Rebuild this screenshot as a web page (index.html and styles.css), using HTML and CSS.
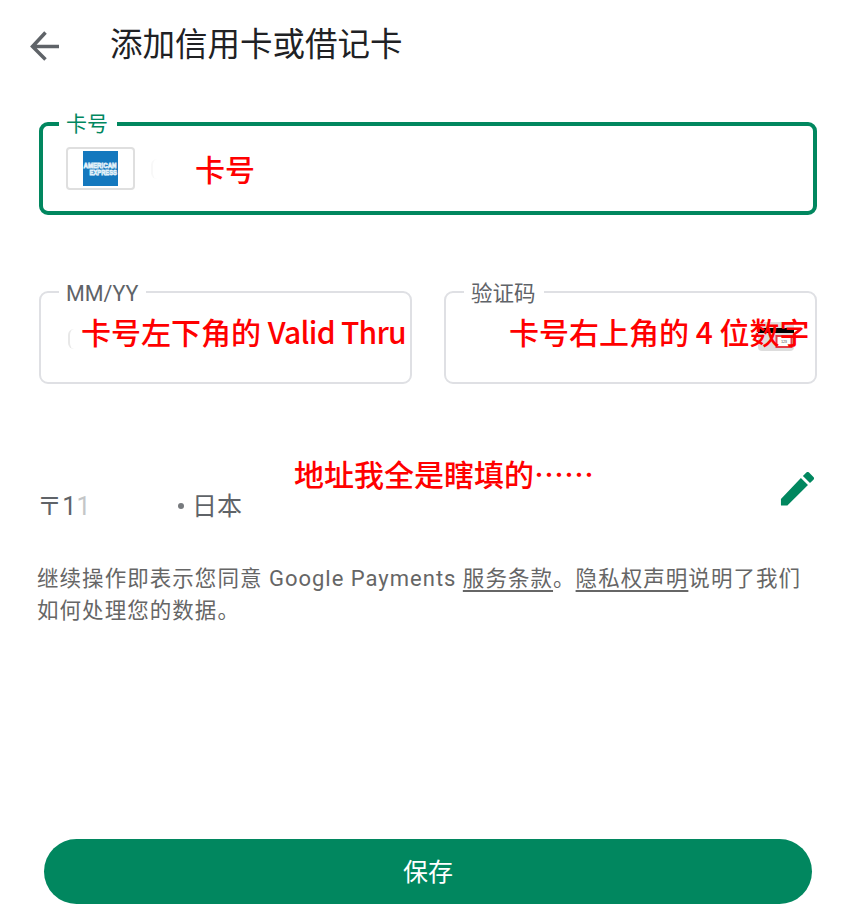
FILE: index.html
```html
<!DOCTYPE html>
<html lang="zh-CN">
<head>
<meta charset="utf-8">
<title>添加信用卡或借记卡</title>
<link rel="stylesheet" href="styles.css">
</head>
<body>
<main class="page">
  <header class="header">
    <svg class="back" viewBox="0 0 30 30"><path d="M15.500 1.500 2.500 15.500l13 13M2.500 15.500h26.500" fill="none" stroke="#5f6368" stroke-width="3.500"/></svg>
    <h1 class="title">添加信用卡或借记卡</h1>
  </header>

  <section class="field field-active">
    <span class="label">卡号</span>
    <div class="brand">
      <svg width="35" height="35" viewBox="0 0 35 35">
        <rect width="35" height="35" fill="#1478be"/>
        <g class="amex"><text x="0.500" y="16.800" textLength="33" lengthAdjust="spacingAndGlyphs">AMERICAN</text><text x="6.500" y="24.300" textLength="27.500" lengthAdjust="spacingAndGlyphs">EXPRESS</text></g>
      </svg>
    </div>
    <i class="smudge"></i>
    <span class="note note-number">卡号</span>
  </section>

  <div class="row">
    <section class="field">
      <span class="label label-date">MM/YY</span>
      <i class="smudge smudge-date"></i>
      <span class="note note-date">卡号左下角的 <span class="note-latin">Valid Thru</span></span>
    </section>
    <section class="field">
      <span class="label label-code">验证码</span>
      <svg class="cvc" width="36" height="29" viewBox="0 0 36 29">
        <rect width="36" height="29" rx="4" fill="#ddd"/>
        <rect y="6" width="36" height="5" fill="#000"/>
        <rect x="18.500" y="14" width="15" height="11" fill="#fff" stroke="#e53946" stroke-width="2"/>
        <text class="digits" x="23" y="21" textLength="6">123</text>
      </svg>
      <span class="note note-code">卡号右上角的 4 位数字</span>
    </section>
  </div>

  <section class="address">
    <span class="note note-address">地址我全是瞎填的……</span>
    <div class="postal"><span>〒1</span><span class="faded">1</span></div>
    <i class="dot"></i>
    <span class="country">日本</span>
    <svg class="edit" width="34" height="34" viewBox="3 3 18 18"><path fill="#01875f" d="M3.500 17.250V20.700h3.400L17.810 9.940l-3.750-3.750L3.500 17.250zM20.710 7.040a1 1 0 0 0 0-1.410l-2.340-2.340a1 1 0 0 0-1.410 0l-1.830 1.830 3.750 3.750 1.830-1.830z"/></svg>
  </section>

  <p class="terms">继续操作即表示您同意 <span class="latin">Google Payments</span> <a>服务条款</a>。<a>隐私权声明</a>说明了我们<br>如何处理您的数据。</p>
  <button class="save">保存</button>
</main>
</body>
</html>
```
FILE: styles.css
```css
* { box-sizing: border-box; }
body { margin: 0; background: #fff; font-family: Roboto, "Noto Sans CJK SC", sans-serif; color: #5f6368; }
.page { height: 923px; padding: 0 44px 0 39px; display: flex; flex-direction: column; overflow: hidden; }
.header { height: 122px; display: flex; align-items: flex-start; margin-left: -9px; flex: none; }
.back { width: 30px; height: 30px; margin-top: 31px; }
.title { margin: 21px 0 0 50px; font-size: 32.5px; line-height: 48px; font-weight: 400; color: #202124; white-space: nowrap; }
.field { position: relative; height: 93px; border: 2px solid #dfe0e4; border-radius: 9px; flex: none; }
.field-active { width: 778px; border: 4px solid #01875f; padding: 21px 0 0 23px; }
.label { position: absolute; top: -15px; left: 18px; padding: 0 7px; background: #fff; font-size: 21.5px; line-height: 32px; height: 32px; white-space: nowrap; }
.field-active .label { left: 16px; top: -18px; width: 58px; color: #01875f; font-size: 21px; }
.label-date { width: 87px; }
.label-code { width: 80px; font-size: 21.5px; }
.brand { width: 69px; height: 43px; border: 2px solid #dfdfdf; border-radius: 4px; display: flex; align-items: center; justify-content: center; }
.amex { font-family: "Liberation Sans", sans-serif; font-size: 6.8px; font-weight: 700; fill: #3f91cb; stroke: #e4f1f9; stroke-width: .8px; }
.smudge { position: absolute; left: 108px; top: 33px; width: 12px; height: 20px; border-left: 2px solid #f8f8f8; border-radius: 8px; }
.smudge-date { left: 27px; top: 36px; border-color: #e8e8e8; }
.note { position: absolute; font: 500 30px/44px "Noto Sans CJK SC", sans-serif; color: #f00; white-space: nowrap; }
.note-number { left: 152px; top: 20px; }
.note-date { left: 40px; top: 16px; }
.note-latin { letter-spacing: -.7px; }
.note-code { left: 63px; top: 16px; }
.row { display: grid; grid-template-columns: 373px 373px; gap: 32px; margin-top: 76px; }
.cvc { position: absolute; left: 312px; top: 29px; }
.digits { font: 4px "Liberation Sans", sans-serif; fill: #555; }
.address { position: relative; height: 64px; margin-top: 74px; width: 778px; display: flex; align-items: flex-end; font-size: 25px; line-height: 36px; flex: none; }
.note-address { left: 255px; top: -7px; }
.postal { width: 139px; margin: 0 0 -3px -2px; white-space: nowrap; letter-spacing: .2px; }
.country { margin: 0 0 -3px -1px; }
.faded { color: #c4c6c8; }
.dot { width: 6px; height: 6px; margin: 0 9px 13px 2px; border-radius: 50%; background: #777a7e; }
.edit { margin: 0 3px 16px auto; }
.terms { margin: 41px 0 0 -2px; width: 790px; font-size: 21.5px; line-height: 32px; letter-spacing: 1.05px; color: #666; white-space: nowrap; }
.latin { font-size: 22px; letter-spacing: 1px; }
.terms a { text-decoration: underline; text-decoration-thickness: 2px; text-underline-offset: 4px; }
.save { margin: auto 5px 19px; padding: 0 0 3px; width: 768px; height: 65px; flex: none; border: 0; border-radius: 33px; background: #01875f; color: #fff; font: 400 25px/36px "Noto Sans CJK SC", sans-serif; }
```
